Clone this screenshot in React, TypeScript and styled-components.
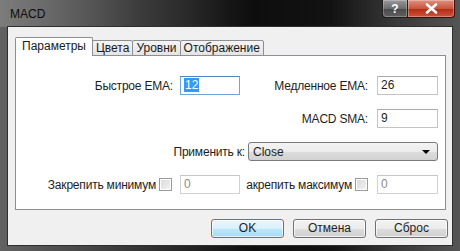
import React from 'react'
import styled, { createGlobalStyle } from 'styled-components'

const GlobalStyle = createGlobalStyle`
  html, body { margin: 0; padding: 0; background: #141414; }
  body { font-family: "Liberation Sans", Arial, sans-serif; }
`

const tabs = ['Параметры', 'Цвета', 'Уровни', 'Отображение']

const App = () => {
  return (
    <>
      <GlobalStyle />
      <Window>
        <TitleBar>
          <Title>MACD</Title>
          <Controls>
            <HelpButton>?</HelpButton>
            <CloseButton>
              <svg width="13" height="11" viewBox="0 0 13 11">
                <path d="M2 1.5 L11 9.5 M11 1.5 L2 9.5" stroke="#fff" strokeWidth="2.6" strokeLinecap="round" />
              </svg>
            </CloseButton>
          </Controls>
        </TitleBar>
        <Client>
          <TabStrip>
            {tabs.map((t, i) => (
              <Tab key={t} $active={i === 0}>{t}</Tab>
            ))}
          </TabStrip>
          <Panel>
            <Row>
              <Cell>
                <Label>Быстрое EMA:</Label>
                <Field $w={60} $gap={7} $focused><Selected>12</Selected></Field>
              </Cell>
              <Cell>
                <Label>Медленное EMA:</Label>
                <Field $w={61} $gap={9}>26</Field>
              </Cell>
            </Row>
            <Row>
              <Cell />
              <Cell>
                <Label>MACD SMA:</Label>
                <Field $w={61} $gap={9}>9</Field>
              </Cell>
            </Row>
            <WideRow>
              <Label>Применить к:</Label>
              <Combo>
                <span>Close</span>
                <Arrow />
              </Combo>
            </WideRow>
            <Row>
              <Cell>
                <Label>Закрепить минимум</Label>
                <Check />
                <Field $w={60} $gap={8} $disabled>0</Field>
              </Cell>
              <Cell>
                <Label>акрепить максимум</Label>
                <Check />
                <Field $w={61} $gap={9} $disabled>0</Field>
              </Cell>
            </Row>
          </Panel>
          <ButtonRow>
            <Button $primary>OK</Button>
            <Button>Отмена</Button>
            <Button>Сброс</Button>
          </ButtonRow>
        </Client>
      </Window>
    </>
  )
}

export default App

const Window = styled.div`
  width: 460px;
  height: 251px;
  display: flex;
  flex-direction: column;
  background: linear-gradient(to right, #626262 0%, #353535 30%, #0e0e0e 55%, #121212 72%, #383838 86%, #555 100%);
  overflow: hidden;
`

const TitleBar = styled.div`
  height: 27px;
  display: flex;
  justify-content: space-between;
  align-items: flex-start;
  background: linear-gradient(to right, rgba(150,150,150,.5), rgba(90,90,90,.2) 30%, rgba(0,0,0,0) 50%);
`

const Title = styled.div`
  padding: 7px 0 0 10px;
  font-size: 12px;
  color: #0c0c0c;
`

const Controls = styled.div`
  display: flex;
  margin-right: 5px;
`

const HelpButton = styled.div`
  width: 26px;
  height: 18px;
  box-sizing: border-box;
  border: 1px solid #1e1e1e;
  border-top: none;
  border-radius: 0 0 0 4px;
  background: linear-gradient(#9a9a9a, #6c6c6c 50%, #4a4a4a 51%, #606060);
  color: #fff;
  font-size: 12px;
  font-weight: bold;
  display: flex;
  align-items: center;
  justify-content: center;
  box-shadow: inset 0 0 0 1px rgba(255,255,255,.25);
`

const CloseButton = styled.div`
  width: 47px;
  height: 18px;
  box-sizing: border-box;
  border: 1px solid #3a1010;
  border-left: none;
  border-top: none;
  border-radius: 0 0 4px 0;
  background: linear-gradient(#e09080, #c8553d 50%, #b02a12 51%, #d0533a);
  display: flex;
  align-items: center;
  justify-content: center;
  box-shadow: inset 0 0 0 1px rgba(255,255,255,.3);
`

const Client = styled.div`
  flex: 1;
  margin: 0 8px 6px 8px;
  background: #f0f0f0;
  padding: 10px 6px 0 7px;
  display: flex;
  flex-direction: column;
  box-shadow: 0 0 0 1px #2e2e2e;
`

const TabStrip = styled.div`
  height: 19px;
  display: flex;
  align-items: flex-end;
  margin-bottom: -1px;
  position: relative;
  z-index: 1;
`

const Tab = styled.div<{ $active?: boolean }>`
  box-sizing: border-box;
  height: ${p => (p.$active ? 19 : 16)}px;
  padding: 0 ${p => (p.$active ? 6 : 3)}px;
  margin-left: -1px;
  border: 1px solid #8c8e94;
  border-bottom: ${p => (p.$active ? 'none' : '1px solid #8c8e94')};
  border-radius: 2px 2px 0 0;
  background: ${p => (p.$active ? '#fff' : 'linear-gradient(#f4f4f4, #e4e4e4)')};
  font-size: 12px;
  line-height: ${p => (p.$active ? 17 : 14)}px;
  color: #1a1a1a;
  white-space: nowrap;
  &:first-child { margin-left: 0; }
`

const Panel = styled.div`
  height: 155px;
  box-sizing: border-box;
  border: 1px solid #8c8e94;
  background: #fff;
  padding: 20px 7px 0 0;
  display: flex;
  flex-direction: column;
  gap: 14px;
`

const Row = styled.div`
  display: grid;
  grid-template-columns: 224px 198px;
  height: 19px;
`

const WideRow = styled.div`
  display: flex;
  justify-content: flex-end;
  align-items: center;
  height: 19px;
  width: 422px;
`

const Cell = styled.div`
  display: flex;
  justify-content: flex-end;
  align-items: center;
`

const Label = styled.span`
  font-size: 12px;
  letter-spacing: -0.2px;
  color: #1e1e1e;
  white-space: nowrap;
`

const Field = styled.div<{ $w: number; $gap: number; $focused?: boolean; $disabled?: boolean }>`
  width: ${p => p.$w}px;
  height: 19px;
  margin-left: ${p => p.$gap}px;
  box-sizing: border-box;
  border: 1px solid ${p => (p.$disabled ? '#cfd1d6' : '#c2c4ca')};
  border-top-color: ${p => (p.$disabled ? '#c4c6cb' : '#a8aab0')};
  background: #fff;
  padding: 0 3px;
  font-size: 12px;
  line-height: 17px;
  color: ${p => (p.$disabled ? '#8a8a8a' : '#1e1e1e')};
  ${p => p.$focused && 'border-color: #6fa5d8; border-top-color: #4f86bf;'}
`

const Selected = styled.span`
  background: #3399ff;
  color: #fff;
  padding: 0 1px;
`

const Combo = styled.div`
  width: 190px;
  height: 19px;
  margin-left: 3px;
  box-sizing: border-box;
  border: 1px solid #7a7a7a;
  border-radius: 3px;
  background: linear-gradient(#f3f3f3, #ececec 50%, #dddddd 51%, #d2d2d2);
  display: flex;
  align-items: center;
  justify-content: space-between;
  padding: 0 7px 0 4px;
  font-size: 12px;
  color: #1e1e1e;
`

const Arrow = styled.span`
  width: 0;
  height: 0;
  border-left: 4px solid transparent;
  border-right: 4px solid transparent;
  border-top: 4px solid #000;
`

const Check = styled.span`
  width: 13px;
  height: 13px;
  margin-left: 3px;
  box-sizing: border-box;
  border: 1px solid #9a9a9a;
  background: linear-gradient(135deg, #d8d8d8, #f4f4f4);
  box-shadow: inset 0 0 0 1px #fff;
`

const ButtonRow = styled.div`
  display: flex;
  justify-content: flex-end;
  gap: 9px;
  padding-top: 9px;
  margin-right: -2px;
`

const Button = styled.div<{ $primary?: boolean }>`
  width: 73px;
  height: 19px;
  box-sizing: border-box;
  border: 1px solid ${p => (p.$primary ? '#3c7fb1' : '#707070')};
  border-radius: 3px;
  background: ${p =>
    p.$primary
      ? 'linear-gradient(#eaf6fd, #d9f0fc 50%, #bee6fd 51%, #a7d9f5)'
      : 'linear-gradient(#f2f2f2, #ebebeb 50%, #dddddd 51%, #cfcfcf)'};
  box-shadow: inset 0 0 0 1px rgba(255,255,255,.7);
  font-size: 12px;
  line-height: 17px;
  color: #1e1e1e;
  text-align: center;
`
